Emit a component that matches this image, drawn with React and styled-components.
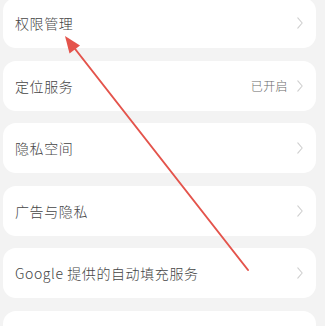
import React from 'react';
import styled, { createGlobalStyle } from 'styled-components';

const GlobalStyle = createGlobalStyle`
  html, body {
    margin: 0;
    padding: 0;
    background: #f3f3f3;
    overflow: hidden;
  }
  body {
    font-family: "Noto Sans CJK SC", "Noto Sans", sans-serif;
  }
`;

const Page = styled.div`
  position: relative;
  width: 325px;
  height: 326px;
  overflow: hidden;
  background: #f3f3f3;
`;

const List = styled.ul`
  list-style: none;
  margin: -2px 0 0 0;
  padding: 0 9px 0 3px;
  display: flex;
  flex-direction: column;
  gap: 12.5px;
`;

const Row = styled.li`
  height: 50px;
  background: #ffffff;
  border-radius: 13px;
  display: flex;
  align-items: center;
  justify-content: space-between;
  padding: 0 13px 0 12px;
  box-sizing: border-box;
`;

const Label = styled.span`
  font-size: 14px;
  font-weight: 300;
  letter-spacing: 0.6px;
  color: #454545;
`;

const Right = styled.div`
  display: flex;
  align-items: center;
  gap: 9px;
`;

const Status = styled.span`
  font-size: 12px;
  font-weight: 300;
  letter-spacing: 0.4px;
  color: #6a6a6a;
`;

const Chevron = () => (
  <svg width="6" height="12" viewBox="0 0 6 12">
    <path d="M0.8 0.8 L5.2 6 L0.8 11.2" fill="none" stroke="#cfcfcf" strokeWidth="1.1" strokeLinecap="round" strokeLinejoin="round" />
  </svg>
);

const Arrow = styled.svg`
  position: absolute;
  left: 0;
  top: 0;
  pointer-events: none;
`;

const rows = [
  { label: '权限管理' },
  { label: '定位服务', status: '已开启' },
  { label: '隐私空间' },
  { label: '广告与隐私' },
  { label: 'Google 提供的自动填充服务' },
  { label: '' },
];

export default function App() {
  return (
    <Page>
      <GlobalStyle />
      <List>
        {rows.map((r, i) => (
          <Row key={i}>
            <Label>{r.label}</Label>
            {r.label && (
              <Right>
                {r.status && <Status>{r.status}</Status>}
                <Chevron />
              </Right>
            )}
          </Row>
        ))}
      </List>
      <Arrow width="325" height="326" viewBox="0 0 325 326">
        <line x1="248" y1="270" x2="72" y2="45" stroke="#e4544c" strokeWidth="2" strokeLinecap="round" />
        <polygon points="65,36 80,45.5 69.5,53.5" fill="#e4544c" />
      </Arrow>
    </Page>
  );
}
